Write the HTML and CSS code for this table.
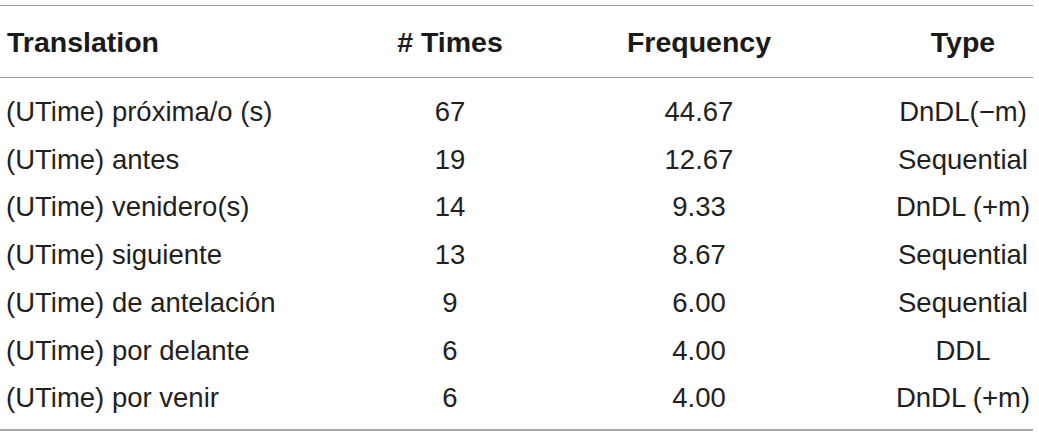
FILE: index.html
```html
<!DOCTYPE html>
<html lang="es">
<head>
<meta charset="utf-8">
<title>Translation table</title>
<link rel="stylesheet" href="styles.css">
</head>
<body>
<div class="table">
  <div class="row head">
    <div class="c1">Translation</div>
    <div class="c2"># Times</div>
    <div class="c3">Frequency</div>
    <div class="c4">Type</div>
  </div>
  <div class="body">
    <div class="row"><div class="c1">(UTime) próxima/o (s)</div><div class="c2">67</div><div class="c3">44.67</div><div class="c4">DnDL(−m)</div></div>
    <div class="row"><div class="c1">(UTime) antes</div><div class="c2">19</div><div class="c3">12.67</div><div class="c4">Sequential</div></div>
    <div class="row"><div class="c1">(UTime) venidero(s)</div><div class="c2">14</div><div class="c3">9.33</div><div class="c4">DnDL (+m)</div></div>
    <div class="row"><div class="c1">(UTime) siguiente</div><div class="c2">13</div><div class="c3">8.67</div><div class="c4">Sequential</div></div>
    <div class="row"><div class="c1">(UTime) de antelación</div><div class="c2">9</div><div class="c3">6.00</div><div class="c4">Sequential</div></div>
    <div class="row"><div class="c1">(UTime) por delante</div><div class="c2">6</div><div class="c3">4.00</div><div class="c4">DDL</div></div>
    <div class="row"><div class="c1">(UTime) por venir</div><div class="c2">6</div><div class="c3">4.00</div><div class="c4">DnDL (+m)</div></div>
  </div>
</div>
</body>
</html>
```
FILE: styles.css
```css
html, body {
  margin: 0;
  padding: 0;
  background: #ffffff;
}
body {
  font-family: "Liberation Sans", Arial, sans-serif;
  color: #231f20;
}
.table {
  width: 1033px;
  margin-top: 5px;
  border-top: 1.5px solid #9a9a9a;
  border-bottom: 2px solid #a6a6a6;
}
.row {
  display: grid;
  grid-template-columns: 395px 110px 388px 140px;
  white-space: nowrap;
}
.row > div {
  text-align: center;
}
.row > .c1 {
  text-align: left;
  padding-left: 6px;
}
.head {
  font-weight: bold;
  font-size: 28.5px;
  line-height: 30px;
  color: #1a1a1a;
  padding-top: 21px;
  padding-bottom: 19.5px;
  border-bottom: 1.5px solid #9a9a9a;
}
.head > .c1 {
  padding-left: 7px;
}
.body {
  font-size: 27.5px;
  line-height: 47.7px;
  padding-top: 10.5px;
  padding-bottom: 7.5px;
}
.body .row > .c4 {
  letter-spacing: 0;
}
```
